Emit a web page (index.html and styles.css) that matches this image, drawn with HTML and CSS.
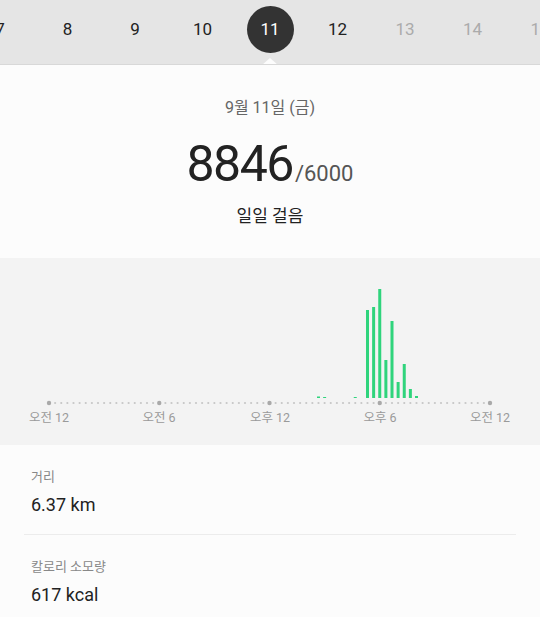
FILE: index.html
```html
<!DOCTYPE html>
<html lang="ko">
<head>
	<meta charset="utf-8" />
	<title>일일 걸음</title>
	<link rel="stylesheet" href="styles.css">
</head>
<body>
	<div class="days">
		<div class="day-row">
			<div class="day"><span>7</span></div>
			<div class="day"><span>8</span></div>
			<div class="day"><span>9</span></div>
			<div class="day"><span>10</span></div>
			<div class="day active"><span>11</span></div>
			<div class="day"><span>12</span></div>
			<div class="day future"><span>13</span></div>
			<div class="day future"><span>14</span></div>
			<div class="day future"><span>15</span></div>
		</div>
	</div>

	<div class="summary">
		<div class="date">9월 11일 (금)</div>
		<div class="total"><span class="steps">8846</span><span class="goal">/6000</span></div>
		<div class="caption">일일 걸음</div>
	</div>

	<div class="chart">
		<svg id="chart" width="540" height="187" viewBox="0 0 540 187">
			<g id="bars" fill="#2fd47c"></g>
			<g id="axis"></g>
			<g class="axis-label">
				<text x="49" y="164">오전 12</text>
				<text x="159" y="164">오전 6</text>
				<text x="270" y="164">오후 12</text>
				<text x="380" y="164">오후 6</text>
				<text x="490" y="164">오전 12</text>
			</g>
		</svg>
	</div>

	<div class="stats">
		<div class="stat">
			<div class="stat-label">거리</div>
			<div class="stat-value">6.37 km</div>
		</div>
		<div class="stat">
			<div class="stat-label">칼로리 소모량</div>
			<div class="stat-value">617 kcal</div>
		</div>
	</div>

	<script>
		// 20 minute slots, 72 per day
		var left = 49, step = 441 / 72, base = 140, axisY = 145;
		var ns = "http://www.w3.org/2000/svg";

		var axis = document.getElementById("axis");
		for (var i = 0; i <= 72; i++) {
			var dot = document.createElementNS(ns, "circle");
			var major = i % 18 == 0;
			dot.setAttribute("cx", left + i * step);
			dot.setAttribute("cy", axisY);
			dot.setAttribute("r", major ? 2.2 : 1.1);
			dot.setAttribute("fill", major ? "#a9a9a9" : "#c6c6c6");
			axis.appendChild(dot);
		}

		var data = { 44: 1.5, 45: 1, 50: 1, 52: 88, 53: 91, 54: 109, 55: 38, 56: 77, 57: 16, 58: 34, 59: 9, 60: 2 };
		var bars = document.getElementById("bars");
		for (var slot in data) {
			var bar = document.createElementNS(ns, "rect");
			bar.setAttribute("x", left + slot * step - 1.5);
			bar.setAttribute("y", base - data[slot]);
			bar.setAttribute("width", 3);
			bar.setAttribute("height", data[slot]);
			bars.appendChild(bar);
		}
	</script>
</body>
</html>
```

FILE: styles.css
```css
body {
	font-family: Roboto, "Noto Sans CJK KR", sans-serif;
	background-color: #fcfcfc;
	color: #222;
	margin: 0;
	padding: 0;
	overflow: hidden;
}

/* Day picker strip */
.days {
	position: relative;
	height: 64px;
	background-color: #e5e5e5;
	border-bottom: 1px solid #d8d8d8;
	overflow: hidden;
}

.days::after {
	content: "";
	position: absolute;
	left: 262px;
	bottom: -1px;
	border-left: 8px solid transparent;
	border-right: 8px solid transparent;
	border-bottom: 7px solid #fcfcfc;
}

.day-row {
	display: flex;
	margin-left: -33.75px;
	padding-top: 6px;
}

.day {
	flex: 0 0 67.5px;
	display: flex;
	justify-content: center;
	height: 47px;
	line-height: 47px;
	font-size: 17px;
}

.day.future {
	color: #ababab;
}

.day.active span {
	width: 47px;
	border-radius: 50%;
	background-color: #333;
	color: #fff;
	text-align: center;
}

/* Daily total */
.summary {
	padding: 31px 0 30px;
	text-align: center;
}

.date {
	line-height: 24px;
	font-size: 16px;
	color: #666;
}

.total {
	display: flex;
	justify-content: center;
	align-items: baseline;
	height: 60px;
	margin-top: 14px;
	line-height: 60px;
}

.steps {
	font-size: 50px;
	letter-spacing: -1.5px;
	color: #222;
}

.goal {
	font-size: 22px;
	color: #555;
	margin-left: 2px;
}

.caption {
	margin-top: 10px;
	line-height: 24px;
	font-size: 17px;
	color: #222;
}

/* Hourly chart */
.chart {
	background-color: #f3f3f3;
	height: 187px;
}

.chart svg {
	display: block;
}

.axis-label text {
	font-family: Roboto, "Noto Sans CJK KR", sans-serif;
	font-size: 12.5px;
	fill: #9a9a9a;
	text-anchor: middle;
}

/* Distance and calories */
.stats {
	padding: 0 24px;
}

.stat {
	padding: 22px 7px 16px;
}

.stat + .stat {
	border-top: 1px solid #ececec;
}

.stat-label {
	line-height: 20px;
	font-size: 13px;
	color: #888;
}

.stat-value {
	margin-top: 5px;
	line-height: 26px;
	font-size: 18px;
	color: #222;
}
```
